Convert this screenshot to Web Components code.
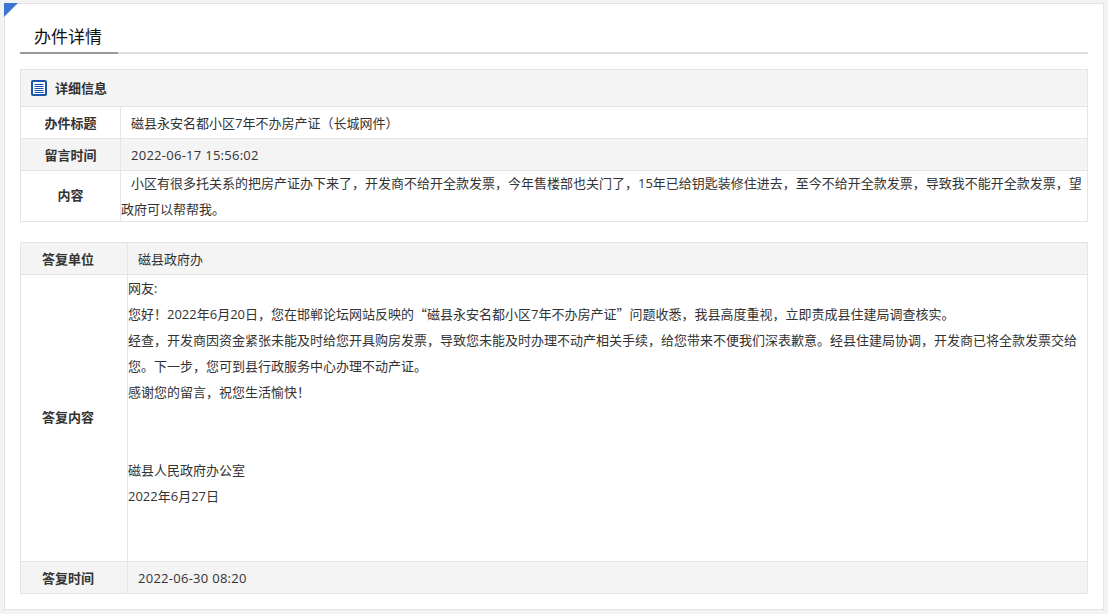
<!DOCTYPE html>
<html>
<head>
<meta charset="utf-8">
<title>办件详情</title>
<style>
  html, body { margin: 0; height: 100%; }
  body {
    background: #f3f3f3;
    color: #333;
    font: 13px "Open Sans", "Noto Sans CJK SC", sans-serif;
  }
  .q { font-family: "Noto Sans CJK SC", sans-serif; }
  .stamp { letter-spacing: .27px; }
</style>
</head>
<body>
<detail-page>
  <tab-title>办件详情</tab-title>
  <detail-table>
    <table-head>详细信息</table-head>
    <detail-row label="办件标题" width="100">磁县永安名都小区7年不办房产证（长城网件）</detail-row>
    <detail-row label="留言时间" width="100" shaded><span class="stamp">2022-06-17 15:56:02</span></detail-row>
    <detail-row label="内容" width="100" flush height="50"><div style="text-indent:10px;margin-top:-1px">小区有很多托关系的把房产证办下来了，开发商不给开全款发票，今年售楼部也关门了，15年已给钥匙装修住进去，至今不给开全款发票，导致我不能开全款发票，望政府可以帮帮我。</div></detail-row>
  </detail-table>
  <detail-table style="margin-top:20px">
    <detail-row label="答复单位" width="107" offset shaded>磁县政府办</detail-row>
    <detail-row label="答复内容" width="107" offset flush height="286">
      <div>网友:</div>
      <div>您好！2022年6月20日，您在邯郸论坛网站反映的<span class="q">“</span>磁县永安名都小区7年不办房产证<span class="q">”</span>问题收悉，我县高度重视，立即责成县住建局调查核实。</div>
      <div>经查，开发商因资金紧张未能及时给您开具购房发票，导致您未能及时办理不动产相关手续，给您带来不便我们深表歉意。经县住建局协调，开发商已将全款发票交给您。下一步，您可到县行政服务中心办理不动产证。</div>
      <div>感谢您的留言，祝您生活愉快！</div>
      <div><br></div>
      <div><br></div>
      <div>磁县人民政府办公室</div>
      <div>2022年6月27日</div>
    </detail-row>
    <detail-row label="答复时间" width="107" offset shaded><span class="stamp">2022-06-30 08:20</span></detail-row>
  </detail-table>
</detail-page>

<script>
  class DetailPage extends HTMLElement {
    constructor () {
      super()
      this.attachShadow({ mode: 'open' }).innerHTML = `
        <style>
          :host {
            display: block;
            box-sizing: border-box;
            position: relative;
            width: 1100px;
            height: 607px;
            margin: 3px 0 0 4px;
            padding: 15px 15px 0 15px;
            background: white;
            border: 1px solid #e2e2e2;
          }
          .corner {
            position: absolute;
            left: -1px;
            top: -1px;
            width: 0;
            height: 0;
            border-top: 14px solid #3c76d2;
            border-right: 14px solid transparent;
          }
        </style>
        <div class='corner'></div>
        <slot></slot>
      `
    }
  }

  class TabTitle extends HTMLElement {
    constructor () {
      super()
      this.attachShadow({ mode: 'open' }).innerHTML = `
        <style>
          :host {
            display: block;
            height: 33px;
            width: 1068px;
            margin-bottom: 15px;
            border-bottom: 2px solid #dedede;
            color: #111;
            font-size: 17px;
          }
          span {
            display: inline-block;
            height: 33px;
            width: 84px;
            padding-left: 14px;
            line-height: 35px;
            border-bottom: 2px solid #999;
          }
        </style>
        <span><slot></slot></span>
      `
    }
  }

  class DetailTable extends HTMLElement {
    constructor () {
      super()
      this.attachShadow({ mode: 'open' }).innerHTML = `
        <style>
          :host {
            display: block;
            width: 1068px;
            box-sizing: border-box;
            border: 1px solid #e4e4e4;
            border-bottom: 0;
          }
        </style>
        <slot></slot>
      `
    }
  }

  class TableHead extends HTMLElement {
    constructor () {
      super()
      this.attachShadow({ mode: 'open' }).innerHTML = `
        <style>
          :host {
            display: flex;
            align-items: center;
            gap: 8px;
            height: 36px;
            padding-left: 10px;
            background: #f4f4f4;
            border-bottom: 1px solid #e4e4e4;
            font-weight: bold;
          }
          svg { display: block; }
          span { position: relative; top: -1px; }
        </style>
        <svg width="16" height="16" viewBox="0 0 16 16">
          <rect x="0" y="0" width="16" height="16" rx="2" fill="#1a55ad"/>
          <rect x="2" y="2" width="12" height="12" fill="#fff"/>
          <path d="M3.5 4.5h9M3.5 6.5h9M3.5 8.5h9M3.5 10.5h9M3.5 12.5h9" stroke="#1a55ad" stroke-width="1" fill="none"/>
        </svg>
        <span><slot></slot></span>
      `
    }
  }

  class DetailRow extends HTMLElement {
    constructor () {
      super()
      let label = this.getAttribute('label')
      let width = this.getAttribute('width') || 100
      let height = this.getAttribute('height') || 31
      this.attachShadow({ mode: 'open' }).innerHTML = `
        <style>
          :host {
            display: flex;
            height: ${height}px;
            border-bottom: 1px solid #e4e4e4;
          }
          :host([shaded]) { background: #f4f4f4; }
          .label {
            flex: none;
            box-sizing: border-box;
            display: flex;
            align-items: center;
            justify-content: center;
            width: ${width}px;
            border-right: 1px solid #e4e4e4;
            font-weight: bold;
          }
          :host([flush]) .label { padding-bottom: 4px; }
          :host([offset]) .label { padding-right: 12px; }
          .value {
            flex: 1;
            min-width: 0;
            padding: 1px 0 0 10px;
            line-height: ${height - 1}px;
          }
          :host([flush]) .value {
            padding: 0;
            line-height: 26px;
          }
        </style>
        <div class='label'></div>
        <div class='value'><slot></slot></div>
      `
      this.shadowRoot.querySelector('.label').textContent = label
    }
  }

  window.customElements.define('detail-page', DetailPage)
  window.customElements.define('tab-title', TabTitle)
  window.customElements.define('detail-table', DetailTable)
  window.customElements.define('table-head', TableHead)
  window.customElements.define('detail-row', DetailRow)
</script>
</body>
</html>
